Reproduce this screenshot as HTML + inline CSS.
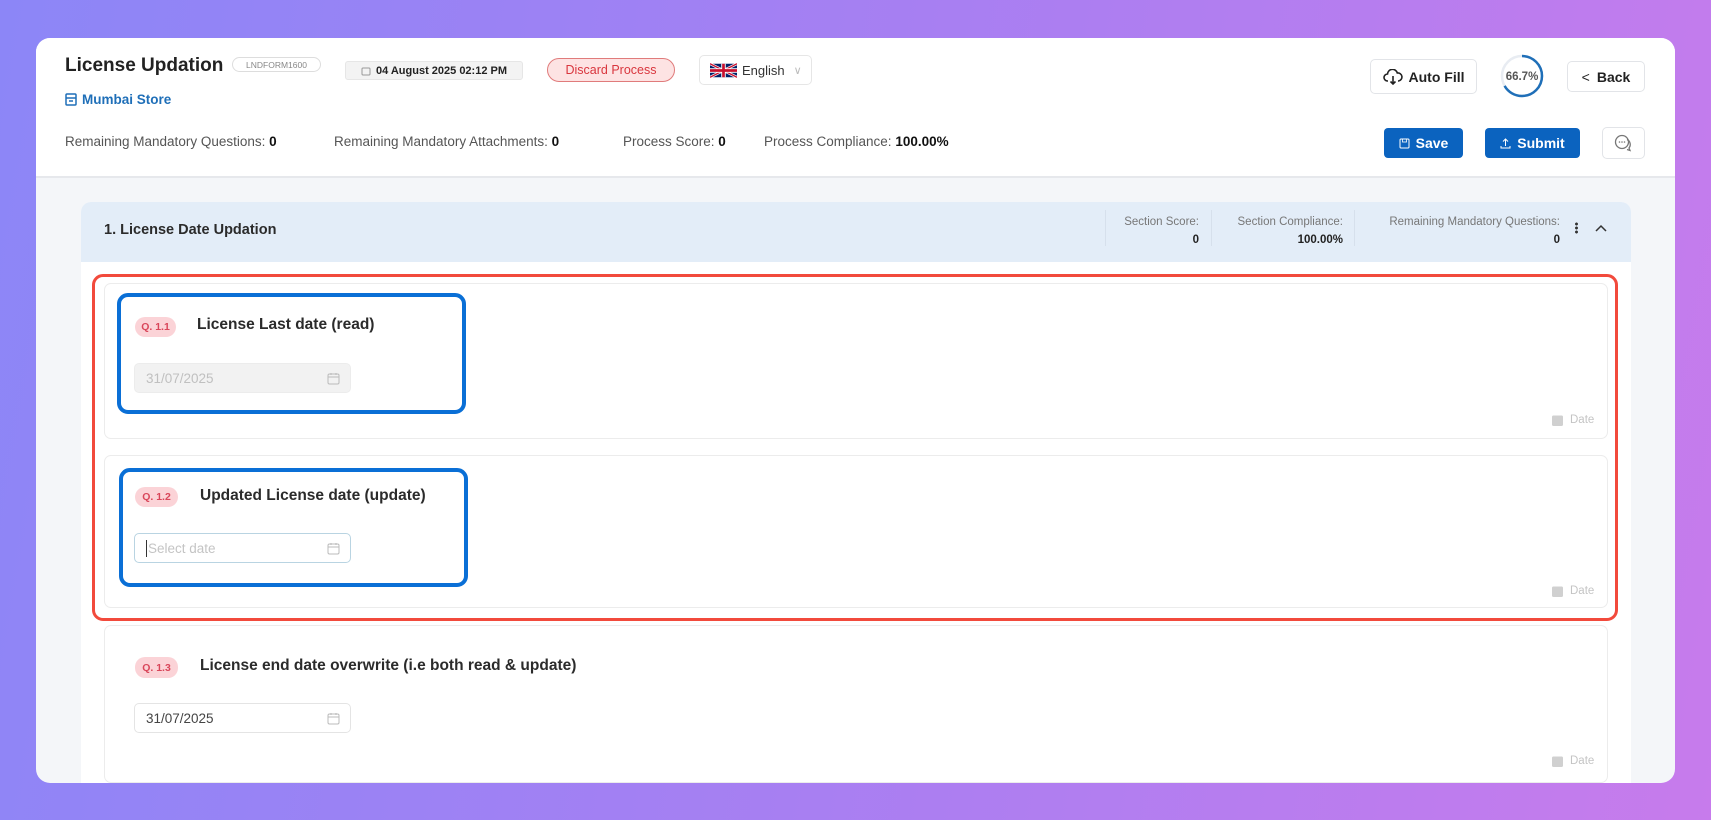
<!DOCTYPE html>
<html><head><meta charset="utf-8"><style>
*{box-sizing:border-box;margin:0;padding:0}
body{width:1711px;height:820px;overflow:hidden;font-family:"Liberation Sans",sans-serif;background:linear-gradient(100deg,#8c86f7 0%,#a77ff2 50%,#c77bec 100%);position:relative}
.a{position:absolute}
.card{left:36px;top:38px;width:1639px;height:745px;background:#f4f6f9;border-radius:14px;overflow:hidden}
.hdr{left:0;top:0;width:1639px;height:140px;background:#fff;border-bottom:2px solid #e6e8ec}
.btn{border:1px solid #e2e4e8;border-radius:5px;background:#fff;display:flex;align-items:center;justify-content:center;font-size:14px;font-weight:bold;color:#222}
.blue{background:#0b63bf;color:#fff;border:none;border-radius:4px;display:flex;align-items:center;justify-content:center;font-size:14px;font-weight:bold}
.stat{font-size:13.5px;color:#555;top:96px}
.stat b{color:#111}
.panel{left:45px;top:164px;width:1550px;height:600px;background:#fff;border-radius:10px 10px 0 0;overflow:hidden}
.ph{left:0;top:0;width:1550px;height:60px;background:#e3edf8}
.sl{font-size:11.5px;color:#777;text-align:right}
.sv{font-size:11.5px;font-weight:bold;color:#222;text-align:right}
.q{background:#fff;border:1px solid #ececec;border-radius:7px}
.badge{background:#fbd3d7;color:#d9465a;font-size:10.5px;font-weight:bold;border-radius:10px;display:flex;align-items:center;justify-content:center}
.qt{font-size:15.5px;font-weight:bold;color:#2b2b2b}
.inp{width:217px;height:30px;border:1px solid #e4e4e4;border-radius:5px;font-size:13.5px;color:#444;padding-left:11px;display:flex;align-items:center}
.cal{position:absolute;right:10px;top:8px}
.dl{font-size:11.5px;color:#c4c4c4;display:flex;align-items:center;gap:7px}
.bb{border:4px solid #0a6fd6;border-radius:11px}
</style></head><body>
<div class="a card">
 <div class="a hdr">
  <div class="a" style="left:29px;top:17px;font-size:19px;font-weight:bold;color:#222">License Updation</div>
  <div class="a" style="left:196px;top:19px;width:89px;height:15px;border:1px solid #ddd;border-radius:8px;font-size:8.5px;color:#888;display:flex;align-items:center;justify-content:center">LNDFORM1600</div>
  <div class="a" style="left:309px;top:23px;width:178px;height:19px;background:#f3f3f3;border:1px solid #e6e6e6;border-radius:3px;font-size:11px;font-weight:bold;color:#222;display:flex;align-items:center;justify-content:center;gap:5px"><svg width="10" height="10" viewBox="0 0 10 10"><rect x="1" y="2" width="8" height="7" rx="1" fill="none" stroke="#999"/></svg>04 August 2025 02:12 PM</div>
  <div class="a" style="left:511px;top:20px;width:128px;height:24px;background:#fde3e3;border:1px solid #e07b7b;border-radius:12px;font-size:12.5px;color:#d9363e;display:flex;align-items:center;justify-content:center">Discard Process</div>
  <div class="a" style="left:663px;top:17px;width:113px;height:30px;border:1px solid #e6e6e6;border-radius:5px;font-size:13px;color:#333;display:flex;align-items:center;padding-left:10px;gap:5px"><svg width="27" height="15" viewBox="0 0 60 30"><rect width="60" height="30" fill="#012169"/><path d="M0 0L60 30M60 0L0 30" stroke="#fff" stroke-width="6"/><path d="M0 0L60 30M60 0L0 30" stroke="#C8102E" stroke-width="3"/><path d="M30 0V30M0 15H60" stroke="#fff" stroke-width="10"/><path d="M30 0V30M0 15H60" stroke="#C8102E" stroke-width="6"/></svg>English <span style="color:#bbb;font-size:11px;margin-left:4px">∨</span></div>
  <div class="a" style="left:29px;top:54px;font-size:13.5px;font-weight:bold;color:#1f6fb8;display:flex;align-items:center;gap:5px"><svg width="12" height="13" viewBox="0 0 12 13"><rect x="1" y="1" width="10" height="11" rx="1" fill="none" stroke="#1f6fb8" stroke-width="1.5"/><path d="M1 5H11M4 8H8" stroke="#1f6fb8" stroke-width="1.5"/></svg>Mumbai Store</div>
  <div class="a stat" style="left:29px">Remaining Mandatory Questions: <b>0</b></div>
  <div class="a stat" style="left:298px">Remaining Mandatory Attachments: <b>0</b></div>
  <div class="a stat" style="left:587px">Process Score: <b>0</b></div>
  <div class="a stat" style="left:728px">Process Compliance: <b>100.00%</b></div>
  <div class="a btn" style="left:1334px;top:21px;width:107px;height:35px;gap:6px"><svg width="20" height="16" viewBox="0 0 20 16"><path d="M5 12H4.5a3.5 3.5 0 0 1 0-7 5 5 0 0 1 9.8-1A3.7 3.7 0 0 1 15.5 12H15" fill="none" stroke="#222" stroke-width="1.6"/><path d="M10 7V15M7.5 12.5L10 15L12.5 12.5" fill="none" stroke="#222" stroke-width="1.6"/></svg>Auto Fill</div>
  <svg class="a" style="left:1463px;top:15px" width="46" height="46" viewBox="0 0 46 46"><circle cx="23" cy="23" r="20" fill="none" stroke="#e8ecf2" stroke-width="2.5"/><circle cx="23" cy="23" r="20" fill="none" stroke="#1f6fb8" stroke-width="2.5" stroke-dasharray="83.8 125.7" transform="rotate(-90 23 23)"/><text x="23" y="27" text-anchor="middle" font-size="11.5" font-weight="bold" fill="#555" font-family="Liberation Sans">66.7%</text></svg>
  <div class="a btn" style="left:1531px;top:23px;width:78px;height:31px;gap:7px"><span style="font-weight:normal">&lt;</span>Back</div>
  <div class="a blue" style="left:1348px;top:90px;width:79px;height:30px;gap:6px"><svg width="11" height="11" viewBox="0 0 11 11"><rect x="1" y="1" width="9" height="9" rx="1" fill="none" stroke="#fff"/><rect x="3.5" y="1" width="4" height="3" fill="none" stroke="#fff" stroke-width=".8"/></svg>Save</div>
  <div class="a blue" style="left:1449px;top:90px;width:95px;height:30px;gap:6px"><svg width="11" height="11" viewBox="0 0 11 11"><path d="M5.5 8V1M3 3.5L5.5 1L8 3.5M1 8V10H10V8" fill="none" stroke="#fff"/></svg>Submit</div>
  <div class="a btn" style="left:1566px;top:89px;width:43px;height:32px"><svg width="20" height="18" viewBox="0 0 20 18"><circle cx="8" cy="8" r="6.5" fill="none" stroke="#777" stroke-width="1.3"/><path d="M13 5.5a5.5 5.5 0 0 1 2 8.5L16 16.5L13 15.5" fill="none" stroke="#777" stroke-width="1.3"/><circle cx="5.5" cy="8" r=".8" fill="#777"/><circle cx="8" cy="8" r=".8" fill="#777"/><circle cx="10.5" cy="8" r=".8" fill="#777"/></svg></div>
 </div>
 <div class="a panel">
  <div class="a ph">
   <div class="a" style="left:23px;top:20px;font-size:14.5px;font-weight:bold;color:#2b2b2b">1. License Date Updation</div>
   <div class="a" style="left:1024px;top:8px;width:1px;height:36px;background:#d6e0ec"></div>
   <div class="a" style="left:1130px;top:8px;width:1px;height:36px;background:#d6e0ec"></div>
   <div class="a" style="left:1273px;top:8px;width:1px;height:36px;background:#d6e0ec"></div>
   <div class="a sl" style="right:432px;top:14px">Section Score:</div><div class="a sv" style="right:432px;top:32px">0</div>
   <div class="a sl" style="right:288px;top:14px">Section Compliance:</div><div class="a sv" style="right:288px;top:32px">100.00%</div>
   <div class="a sl" style="right:71px;top:14px">Remaining Mandatory Questions:</div><div class="a sv" style="right:71px;top:32px">0</div>
   <div class="a" style="left:1494px;top:20px;width:3px;height:12px;background:radial-gradient(circle,#333 1.3px,transparent 1.6px) 0 0/3px 4px"></div>
   <svg class="a" style="left:1514px;top:22px" width="12" height="8" viewBox="0 0 12 8"><path d="M1 7L6 2L11 7" fill="none" stroke="#333" stroke-width="1.5"/></svg>
  </div>
 </div>
</div>
<div class="a q" style="left:104px;top:283px;width:1504px;height:156px"></div>
<div class="a q" style="left:104px;top:455px;width:1504px;height:153px"></div>
<div class="a q" style="left:104px;top:625px;width:1504px;height:158px"></div>
<div class="a" style="left:92px;top:274px;width:1526px;height:347px;border:3px solid #f24a3c;border-radius:11px"></div>

<div class="a badge" style="left:135px;top:317px;width:41px;height:20px">Q. 1.1</div>
<div class="a qt" style="left:197px;top:316px">License Last date (read)</div>
<div class="a inp" style="left:134px;top:363px;background:#f2f2f2;color:#c0c0c0;border-color:#ececec">31/07/2025<svg class="cal" width="13" height="13" viewBox="0 0 13 13"><rect x="1" y="2" width="11" height="10" rx="1.5" fill="none" stroke="#bbb"/><path d="M1 5H12M4 1V3M9 1V3" stroke="#bbb"/></svg></div>
<div class="a bb" style="left:117px;top:293px;width:349px;height:121px"></div>

<div class="a badge" style="left:135px;top:487px;width:43px;height:20px">Q. 1.2</div>
<div class="a qt" style="left:200px;top:487px">Updated License date (update)</div>
<div class="a inp" style="left:134px;top:533px;border-color:#b9d4e2;color:#c4c4c4"><span style="border-left:1.5px solid #333;height:17px;margin-right:1px"></span>Select date<svg class="cal" width="13" height="13" viewBox="0 0 13 13"><rect x="1" y="2" width="11" height="10" rx="1.5" fill="none" stroke="#bbb"/><path d="M1 5H12M4 1V3M9 1V3" stroke="#bbb"/></svg></div>
<div class="a bb" style="left:119px;top:468px;width:349px;height:119px"></div>

<div class="a badge" style="left:135px;top:657px;width:43px;height:21px">Q. 1.3</div>
<div class="a qt" style="left:200px;top:657px">License end date overwrite (i.e both read &amp; update)</div>
<div class="a inp" style="left:134px;top:703px">31/07/2025<svg class="cal" width="13" height="13" viewBox="0 0 13 13"><rect x="1" y="2" width="11" height="10" rx="1.5" fill="none" stroke="#bbb"/><path d="M1 5H12M4 1V3M9 1V3" stroke="#bbb"/></svg></div>

<div class="a dl" style="left:1552px;top:414px"><svg width="11" height="12" viewBox="0 0 11 12"><rect x="0" y="1.5" width="11" height="10.5" rx="1.5" fill="#d0d0d0"/></svg>Date</div>
<div class="a dl" style="left:1552px;top:585px"><svg width="11" height="12" viewBox="0 0 11 12"><rect x="0" y="1.5" width="11" height="10.5" rx="1.5" fill="#d0d0d0"/></svg>Date</div>
<div class="a dl" style="left:1552px;top:755px"><svg width="11" height="12" viewBox="0 0 11 12"><rect x="0" y="1.5" width="11" height="10.5" rx="1.5" fill="#d0d0d0"/></svg>Date</div>
</body></html>
